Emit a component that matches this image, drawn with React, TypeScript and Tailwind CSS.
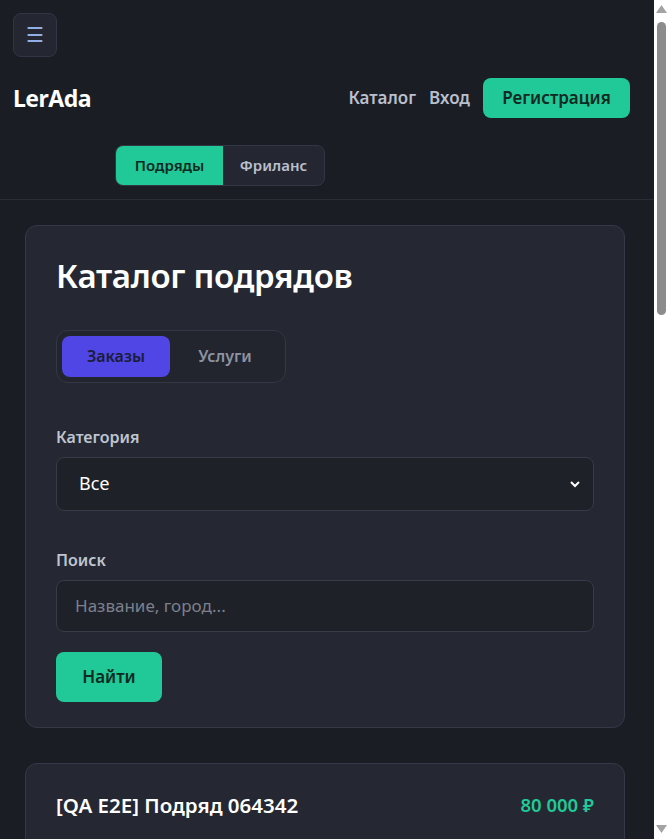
import React from "react"

function Scrollbar() {
  // the browser scrollbar seen on the right of the screenshot
  return (
    <div className="flex w-[15px] shrink-0 flex-col items-center bg-white">
      <svg width="11" height="8" viewBox="0 0 11 8" className="mt-[5px] text-[#a3a3a3]">
        <path d="M5.5 0L11 8H0z" fill="currentColor" />
      </svg>
      <div className="mt-[9px] h-[293px] w-[9px] rounded-full bg-[#8c8c8c]" />
      <div className="flex-1" />
      <svg width="11" height="8" viewBox="0 0 11 8" className="mb-[6px] text-[#a3a3a3]">
        <path d="M0 0H11L5.5 8z" fill="currentColor" />
      </svg>
    </div>
  )
}

export default function App() {
  return (
    <div
      className="flex h-screen overflow-hidden bg-[#1b1d25] text-white"
      style={{ fontFamily: "'Noto Sans', 'Open Sans', Arial, sans-serif" }}
    >
      <div className="min-w-0 flex-1 overflow-hidden">
        {/* header */}
        <header className="border-b border-[#2a2d37] pl-[13px] pr-[24px] pt-[13px] pb-[13px]">
          <button className="flex h-[44px] w-[44px] items-center justify-center rounded-lg border border-[#323644] bg-[#242731] text-[20px] leading-none text-[#8fb0e6]">
            ☰
          </button>
          <div className="mt-[21px] flex items-center justify-between">
            <span className="text-[23px] font-bold tracking-[-0.5px] text-white">LerAda</span>
            <nav className="flex items-center">
              <a className="text-[17px] font-semibold text-[#b9bfcc]">Каталог</a>
              <a className="ml-[13px] text-[17px] font-semibold text-[#b9bfcc]">Вход</a>
              <button className="ml-[13px] h-[40px] w-[147px] rounded-lg bg-[#20c997] text-[17px] font-semibold text-[#0f2a22]">
                Регистрация
              </button>
            </nav>
          </div>
          <div className="mt-[27px] flex pl-[102px]">
            <div className="flex h-[41px] overflow-hidden rounded-lg border border-[#323644] bg-[#242731] text-[15px] font-semibold">
              <span className="flex w-[107px] items-center justify-center bg-[#20c997] text-[#0f2a22]">Подряды</span>
              <span className="flex w-[101px] items-center justify-center text-[#b9bfcc]">Фриланс</span>
            </div>
          </div>
        </header>

        <main className="flex flex-col gap-[35px] pl-[25px] pr-[29px] pt-[25px] pb-10">
          {/* filter card */}
          <section className="rounded-xl border border-[#353846] bg-[#252832] px-[30px] pt-[25px] pb-[25px]">
            <h1 className="text-[33px] font-semibold tracking-[-0.3px] text-white">Каталог подрядов</h1>
            <div className="mt-[29px] inline-flex rounded-xl border border-[#343744] bg-[#22252e] p-[5px] text-[16px] font-semibold">
              <span className="flex h-[41px] w-[108px] items-center justify-center rounded-lg bg-[#4f46e5] text-[#1b1d3a]">
                Заказы
              </span>
              <span className="flex h-[41px] w-[110px] items-center justify-center text-[#8d93a2]">Услуги</span>
            </div>

            <label className="mt-[42px] block text-[16px] font-semibold text-[#bfc4d0]">Категория</label>
            <div className="mt-[8px] flex h-[54px] items-center rounded-lg border border-[#383b48] bg-[#1f2129] pl-[22px] pr-[12px]">
              <span className="flex-1 text-[18px] text-white">Все</span>
              <svg width="12" height="12" viewBox="0 0 12 12" className="text-white">
                <path d="M2 4l4 4 4-4" stroke="currentColor" strokeWidth="2" fill="none" />
              </svg>
            </div>

            <label className="mt-[37px] block text-[16px] font-semibold text-[#bfc4d0]">Поиск</label>
            <div className="mt-[8px] flex h-[52px] items-center rounded-lg border border-[#383b48] bg-[#1f2129] px-[18px]">
              <span className="text-[17px] text-[#7b808c]">Название, город...</span>
            </div>

            <button className="mt-[20px] h-[50px] w-[106px] rounded-lg bg-[#20c997] text-[17px] font-semibold text-[#0f2a22]">
              Найти
            </button>
          </section>

          {/* result */}
          <article className="min-h-[200px] rounded-xl border border-[#353846] bg-[#252832] px-[30px] pt-[26px] pb-[28px]">
            <div className="flex items-start justify-between">
              <h2 className="text-[20.5px] font-semibold text-white">[QA E2E] Подряд 064342</h2>
              <span className="mt-[1px] text-[18.5px] font-semibold text-[#20c997]">80 000 ₽</span>
            </div>
          </article>
        </main>
      </div>
      <Scrollbar />
    </div>
  )
}
